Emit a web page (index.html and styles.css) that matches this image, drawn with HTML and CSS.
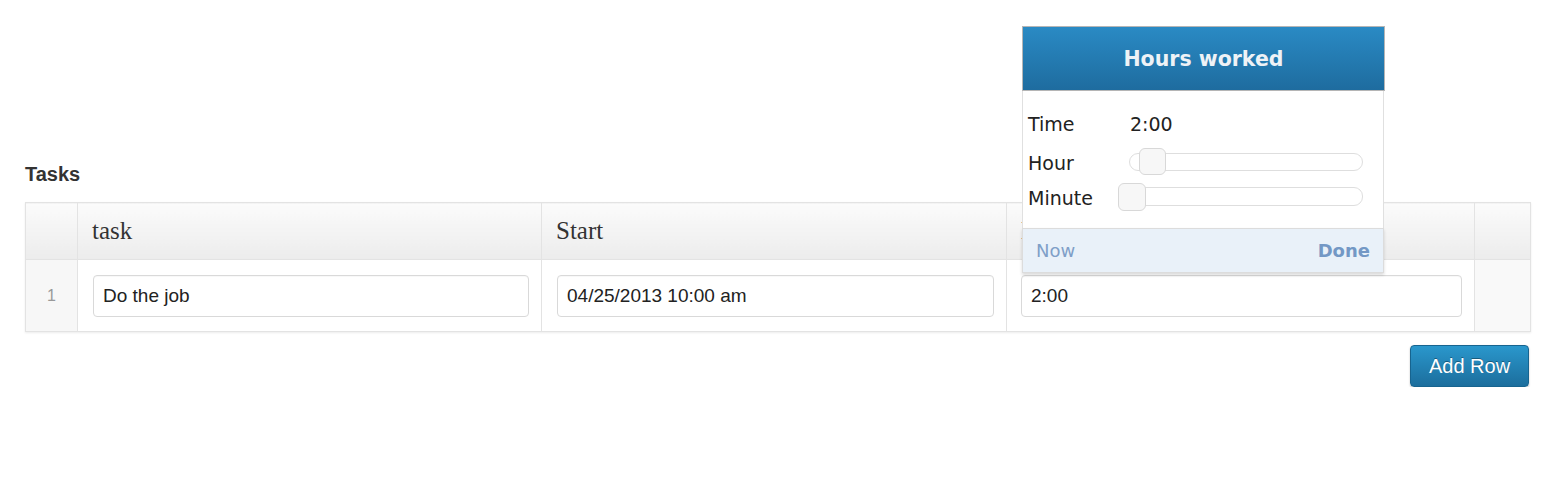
FILE: index.html
```html
<!DOCTYPE html>
<html>
<head>
<meta charset="utf-8">
<link rel="stylesheet" href="styles.css">
</head>
<body>
<div class="page">
  <h2 class="title">Tasks</h2>
  <table class="grid">
    <thead>
      <tr>
        <th class="c-num"></th>
        <th class="c-task">task</th>
        <th class="c-start">Start</th>
        <th class="c-hours">Hours worked</th>
        <th class="c-act"></th>
      </tr>
    </thead>
    <tbody>
      <tr>
        <td class="c-num num">1</td>
        <td class="c-task"><input class="field" type="text" value="Do the job"></td>
        <td class="c-start"><input class="field" type="text" value="04/25/2013 10:00 am"></td>
        <td class="c-hours"><input class="field" type="text" value="2:00"></td>
        <td class="c-act act"></td>
      </tr>
    </tbody>
  </table>
  <div class="actions">
    <button class="btn">Add Row</button>
  </div>
</div>

<div class="picker">
  <div class="picker-head">Hours worked</div>
  <div class="picker-body">
    <div class="prow prow-time">
      <span class="plabel">Time</span>
      <span class="pvalue">2:00</span>
    </div>
    <div class="prow prow-hour">
      <span class="plabel">Hour</span>
      <div class="track track-hour"><span class="handle handle-hour"></span></div>
    </div>
    <div class="prow prow-min">
      <span class="plabel">Minute</span>
      <div class="track track-min"><span class="handle handle-min"></span></div>
    </div>
  </div>
  <div class="picker-foot">
    <span class="now">Now</span>
    <span class="done">Done</span>
  </div>
</div>
</body>
</html>
```

FILE: styles.css
```css
html, body {
  margin: 0;
  padding: 0;
  background: #ffffff;
}
body {
  font-family: "Liberation Sans", Arial, sans-serif;
  color: #333;
}
.page {
  padding: 160px 14px 0 25px;
}
.title {
  margin: 0 0 13px 0;
  font-size: 20px;
  line-height: 29px;
  font-weight: bold;
  color: #333;
}
.grid {
  width: 1505px;
  border-collapse: collapse;
  table-layout: fixed;
  border: 1px solid #dcdcdc;
  box-shadow: 0 1px 2px rgba(0,0,0,0.08);
}
.grid th, .grid td {
  box-sizing: border-box;
  border: 1px solid #e3e3e3;
  padding: 0;
}
.grid th {
  height: 57px;
  background: linear-gradient(#fbfbfb, #ececec);
  font-family: "Liberation Serif", "Times New Roman", serif;
  font-weight: normal;
  font-size: 25px;
  color: #333;
  text-align: left;
  padding-left: 14px;
  white-space: nowrap;
  overflow: hidden;
}
.c-num { width: 52px; }
.c-task { width: 464px; }
.c-start { width: 465px; }
.c-hours { width: 468px; }
.c-act { width: 56px; }
.grid td {
  height: 72px;
  padding: 0 12px 0 15px;
  background: #fff;
}
.grid td.c-hours { padding-left: 14px; }
.grid td.num {
  background: #f7f7f7;
  color: #999;
  text-align: center;
  font-size: 16px;
  padding: 0;
}
.grid td.act {
  background: #f9f9f9;
  padding: 0;
}
.field {
  display: block;
  box-sizing: border-box;
  width: 100%;
  height: 42px;
  border: 1px solid #d9d9d9;
  border-radius: 4px;
  padding: 0 9px;
  font-family: "Liberation Sans", Arial, sans-serif;
  font-size: 19px;
  color: #222;
  background: #fff;
  outline: none;
  box-shadow: inset 0 1px 1px rgba(0,0,0,0.03);
}
.actions {
  display: flex;
  justify-content: flex-end;
  padding-top: 13px;
}
.btn {
  width: 119px;
  height: 42px;
  border: 1px solid #17648f;
  border-radius: 4px;
  background: linear-gradient(#2a97cc, #1c6e9d);
  color: #fff;
  font-family: "Liberation Sans", Arial, sans-serif;
  font-size: 20px;
  text-shadow: 0 -1px 0 rgba(0,0,0,0.35);
  box-shadow: 0 1px 2px rgba(0,0,0,0.25);
  padding: 0;
  margin-right: 1px;
}

/* time picker popup */
.picker {
  position: absolute;
  left: 1022px;
  top: 26px;
  width: 363px;
  font-family: "DejaVu Sans", Verdana, sans-serif;
}
.picker-head {
  box-sizing: border-box;
  height: 65px;
  border: 1px solid #b5b5b5;
  background: linear-gradient(#2a8ac4, #1e6c9f);
  color: #eef2f6;
  font-weight: bold;
  font-size: 20.5px;
  display: flex;
  align-items: center;
  justify-content: center;
}
.picker-body {
  background: #fff;
  border-left: 1px solid #e0e0e0;
  border-right: 1px solid #e0e0e0;
  margin-right: 1px;
  padding: 19px 0 16px 5px;
}
.prow {
  display: flex;
  align-items: center;
  height: 28px;
}
.plabel {
  width: 92px;
  font-size: 19px;
  color: #222;
}
.pvalue {
  margin-left: 10px;
  font-size: 19px;
  color: #222;
}
.prow-hour { margin-top: 11px; }
.prow-min { margin-top: 7px; }
.track {
  position: relative;
  box-sizing: border-box;
  border: 1px solid #dedede;
  border-radius: 9px;
  background: #fff;
}
.track-hour {
  margin-left: 9px;
  width: 234px;
  height: 18px;
  margin-top: -2px;
}
.track-min {
  width: 243px;
  height: 19px;
  margin-top: -3px;
}
.handle {
  position: absolute;
  box-sizing: border-box;
  width: 27px;
  height: 27px;
  border: 1px solid #d8d8d8;
  border-radius: 6px;
  background: #f7f7f7;
}
.handle-hour {
  left: 9px;
  top: -6px;
}
.handle-min {
  left: -3px;
  top: -5px;
  width: 28px;
  height: 28px;
}
.picker-foot {
  box-sizing: border-box;
  height: 45px;
  margin-right: 1px;
  background: #e9f1f9;
  border: 1px solid #dcdcdc;
  box-shadow: 0 2px 3px rgba(0,0,0,0.15);
  display: flex;
  align-items: center;
  justify-content: space-between;
  padding: 0 13px 0 13px;
  font-size: 18px;
}
.now {
  color: #7f9fc8;
}
.done {
  color: #7398c5;
  font-weight: bold;
}
```
